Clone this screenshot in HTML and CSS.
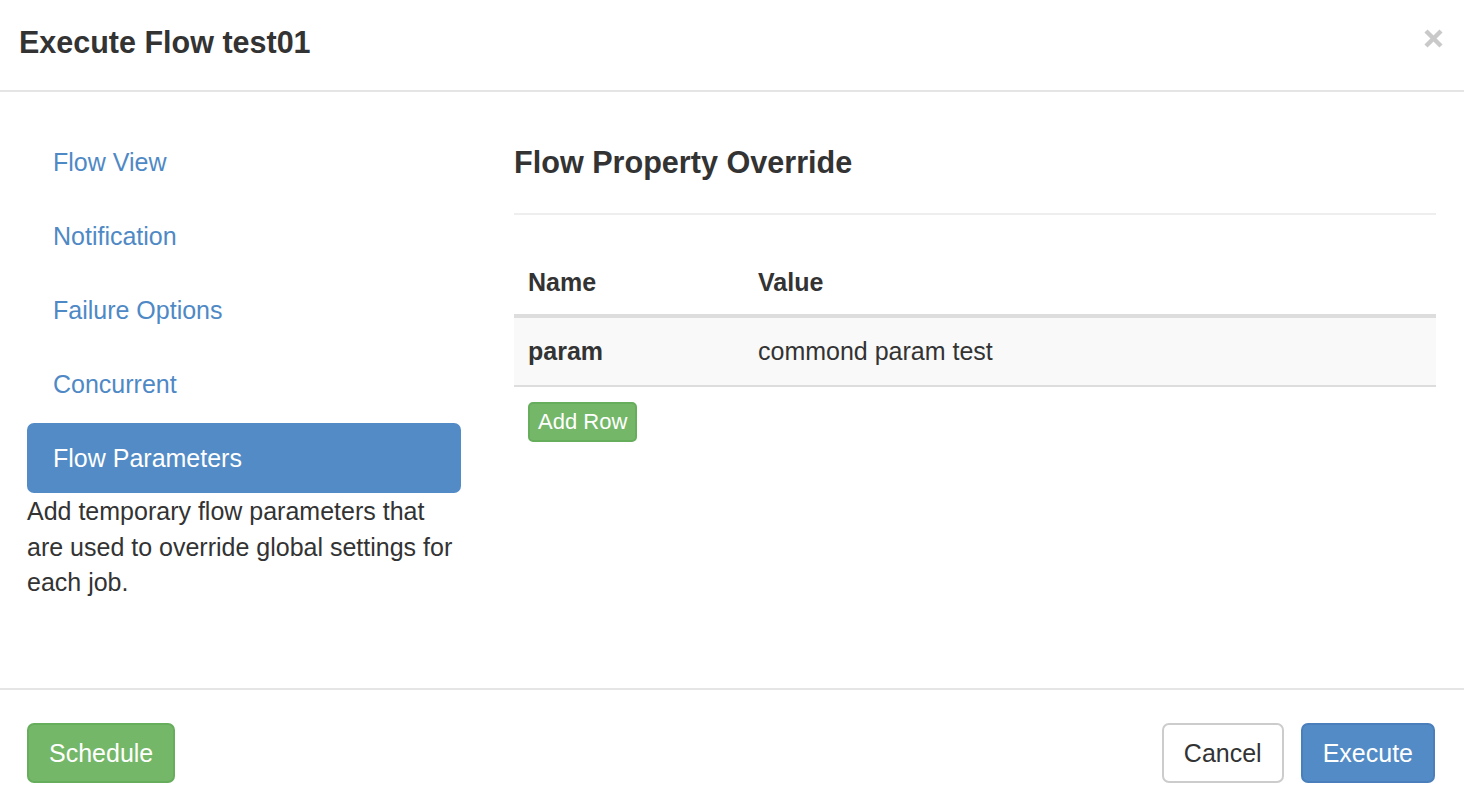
FILE: index.html
```html
<!DOCTYPE html>
<html lang="en">
<head>
<meta charset="utf-8">
<title>Execute Flow test01</title>
<link rel="stylesheet" href="styles.css">
</head>
<body>
<div class="modal">
  <div class="modal-header">
    <h4 class="modal-title">Execute Flow test01</h4>
    <button class="close" type="button" aria-label="Close">
      <svg width="19" height="19" viewBox="0 0 19 19"><path d="M2 2 L17 17 M17 2 L2 17" stroke="#c9c9c9" stroke-width="4.4" fill="none"/></svg>
    </button>
  </div>
  <div class="modal-body">
    <div class="side">
      <ul class="nav-pills">
        <li><a href="#">Flow View</a></li>
        <li><a href="#">Notification</a></li>
        <li><a href="#">Failure Options</a></li>
        <li><a href="#">Concurrent</a></li>
        <li class="active"><a href="#">Flow Parameters</a></li>
      </ul>
      <p class="help">Add temporary flow parameters that are used to override global settings for each job.</p>
    </div>
    <div class="main">
      <h3 class="section-title">Flow Property Override</h3>
      <hr class="divider">
      <table class="props">
        <thead>
          <tr><th class="col-name">Name</th><th>Value</th></tr>
        </thead>
        <tbody>
          <tr><td class="col-name key">param</td><td>commond param test</td></tr>
        </tbody>
      </table>
      <button class="btn btn-success btn-sm" type="button">Add Row</button>
    </div>
  </div>
  <div class="modal-footer">
    <button class="btn btn-success" type="button">Schedule</button>
    <div class="footer-right">
      <button class="btn btn-default" type="button">Cancel</button>
      <button class="btn btn-primary" type="button">Execute</button>
    </div>
  </div>
</div>
</body>
</html>
```

FILE: styles.css
```css
* { box-sizing: border-box; }
html, body {
  margin: 0;
  padding: 0;
  background: #fff;
}
body {
  font-family: "Liberation Sans", Arial, sans-serif;
  font-size: 25px;
  line-height: 36px;
  color: #333;
}
.modal {
  height: 808px;
  display: flex;
  flex-direction: column;
}
.modal-header {
  height: 92px;
  border-bottom: 2px solid #e5e5e5;
  display: flex;
  justify-content: space-between;
  align-items: flex-start;
  padding: 20px 21px 0 19px;
}
.modal-title {
  margin: 0;
  font-size: 30.5px;
  line-height: 44px;
  font-weight: bold;
  color: #333;
}
.close {
  margin-top: 9px;
  padding: 0;
  border: 0;
  background: transparent;
  width: 19px;
  height: 19px;
  line-height: 0;
}
.modal-body {
  flex: 1;
  display: grid;
  grid-template-columns: 434px 1fr;
  column-gap: 53px;
  padding: 27px 28px 0 27px;
}
.nav-pills {
  list-style: none;
  margin: 8px 0 0;
  padding: 0;
  display: flex;
  flex-direction: column;
  gap: 4px;
}
.nav-pills a {
  display: block;
  padding: 17px 26px;
  line-height: 36px;
  color: #4f89c5;
  text-decoration: none;
  border-radius: 7px;
}
.nav-pills .active a {
  background: #528bc5;
  color: #fff;
}
.help {
  margin: 1px 0 0;
  line-height: 35.5px;
}
.section-title {
  margin: 21px 0 0;
  font-size: 30.6px;
  line-height: 44px;
  font-weight: bold;
  color: #333;
}
.divider {
  margin: 29px 0 35px;
  border: 0;
  border-top: 2px solid #eee;
  height: 0;
}
.props {
  width: 100%;
  border-collapse: collapse;
}
.props th {
  text-align: left;
  font-weight: bold;
  padding: 14px 14px;
  line-height: 36px;
  border-bottom: 4px solid #ddd;
}
.props td {
  padding: 15px 14px 16px;
  line-height: 36px;
  background: #f9f9f9;
  border-bottom: 2px solid #ddd;
}
.props .col-name { width: 230px; }
.props .key { font-weight: bold; }
.btn {
  font-family: inherit;
  display: inline-block;
  height: 60px;
  padding: 0 20px;
  font-size: 25px;
  line-height: 56px;
  border: 2px solid transparent;
  border-radius: 7px;
  cursor: pointer;
}
.btn-sm {
  height: 40px;
  padding: 0 8px;
  font-size: 22px;
  line-height: 36px;
  border-radius: 5px;
  margin: 15px 0 0 14px;
}
.btn-success {
  background: #74b768;
  border-color: #66ad5c;
  color: #fff;
}
.btn-primary {
  background: #528bc5;
  border-color: #4a7fbb;
  color: #fff;
}
.btn-default {
  background: #fff;
  border-color: #ccc;
  color: #333;
}
.modal-footer {
  height: 120px;
  border-top: 2px solid #e5e5e5;
  padding: 33px 29px 0 27px;
  display: flex;
  justify-content: space-between;
  align-items: flex-start;
}
.footer-right {
  display: flex;
  gap: 17px;
}
```
